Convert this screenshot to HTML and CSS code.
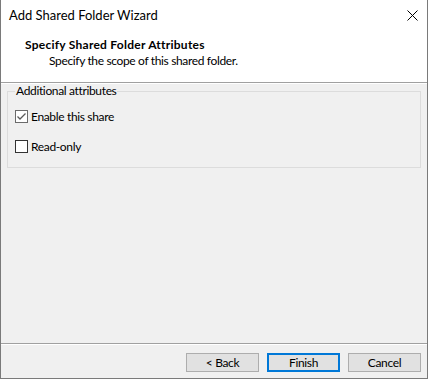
FILE: index.html
```html
<!DOCTYPE html>
<html>
<head>
<meta charset="utf-8">
<link rel="stylesheet" href="styles.css">
</head>
<body>
<div class="window">
  <div class="titlebar">
    <span class="title">Add Shared Folder Wizard</span>
    <svg class="close" width="11" height="11" viewBox="0 0 11 11"><path d="M0.5 0.5 L10.5 10.5 M10.5 0.5 L0.5 10.5" stroke="#000" stroke-width="1" fill="none"/></svg>
  </div>
  <div class="header">
    <div class="h-title">Specify Shared Folder Attributes</div>
    <div class="h-sub">Specify the scope of this shared folder.</div>
  </div>
  <div class="sep"></div>
  <div class="content">
    <fieldset class="group">
      <legend class="legend">Additional attributes</legend>
      <label class="check first">
        <svg class="box" width="13" height="13" viewBox="0 0 13 13"><rect x="0.5" y="0.5" width="12" height="12" fill="#fff" stroke="#6b6b6b"/><path d="M2.5 6.5 L5 9 L10.5 3.5" stroke="#5a5a5a" stroke-width="1.3" fill="none"/></svg>
        <span>Enable this share</span>
      </label>
      <label class="check second">
        <svg class="box" width="13" height="13" viewBox="0 0 13 13"><rect x="0.5" y="0.5" width="12" height="12" fill="#fff" stroke="#333"/></svg>
        <span>Read-only</span>
      </label>
    </fieldset>
  </div>
  <div class="sep"></div>
  <div class="footer">
    <button class="btn">&lt; Back</button>
    <button class="btn primary">Finish</button>
    <button class="btn">Cancel</button>
  </div>
</div>
</body>
</html>
```
FILE: styles.css
```css
html, body {
  margin: 0;
  padding: 0;
}
body {
  font-family: Lato, "Liberation Sans", sans-serif;
  font-size: 12px;
  letter-spacing: -0.35px;
  color: #000;
  background: #fff;
}
.window {
  width: 428px;
  height: 379px;
  box-sizing: border-box;
  border: 1px solid #7a7a7a;
  border-top: none;
  display: flex;
  flex-direction: column;
  background: #f0f0f0;
}
.titlebar {
  height: 30px;
  background: #fff;
  display: flex;
  align-items: center;
  justify-content: space-between;
  padding-left: 8px;
  padding-right: 9px;
}
.title {
  font-size: 13px;
  letter-spacing: 0;
  line-height: 16px;
}
.close {
  display: block;
}
.header {
  height: 52px;
  background: #fff;
  box-sizing: border-box;
  padding-top: 7px;
  padding-left: 24px;
}
.h-title {
  font-weight: bold;
  letter-spacing: 0.25px;
  line-height: 16px;
}
.h-sub {
  line-height: 16px;
  padding-left: 24px;
}
.sep {
  height: 0;
  border-top: 1px solid #a0a0a0;
  border-bottom: 1px solid #fff;
}
.content {
  flex: 1;
  padding: 0 6px;
}
.group {
  margin: -1px 0 0 0;
  padding: 0 0 0 7px;
  height: 85px;
  box-sizing: border-box;
  border: 1px solid #dcdcdc;
}
.legend {
  padding: 0 1px;
  margin-left: 0;
  line-height: 16px;
}
.check {
  display: flex;
  align-items: center;
  gap: 3px;
  height: 15px;
  line-height: 15px;
}
.check.first {
  margin-top: 10px;
}
.check.second {
  margin-top: 15px;
}
.box {
  display: block;
}
.footer {
  height: 33px;
  box-sizing: border-box;
  display: flex;
  justify-content: flex-end;
  gap: 8px;
  padding: 8px 6px 0 0;
}
.btn {
  width: 73px;
  height: 19px;
  box-sizing: border-box;
  margin: 0;
  padding: 0;
  background: #e1e1e1;
  border: 1px solid #adadad;
  font-family: inherit;
  font-size: 12px;
  letter-spacing: inherit;
  color: #000;
}
.btn.primary {
  border: 2px solid #0078d7;
}
```
